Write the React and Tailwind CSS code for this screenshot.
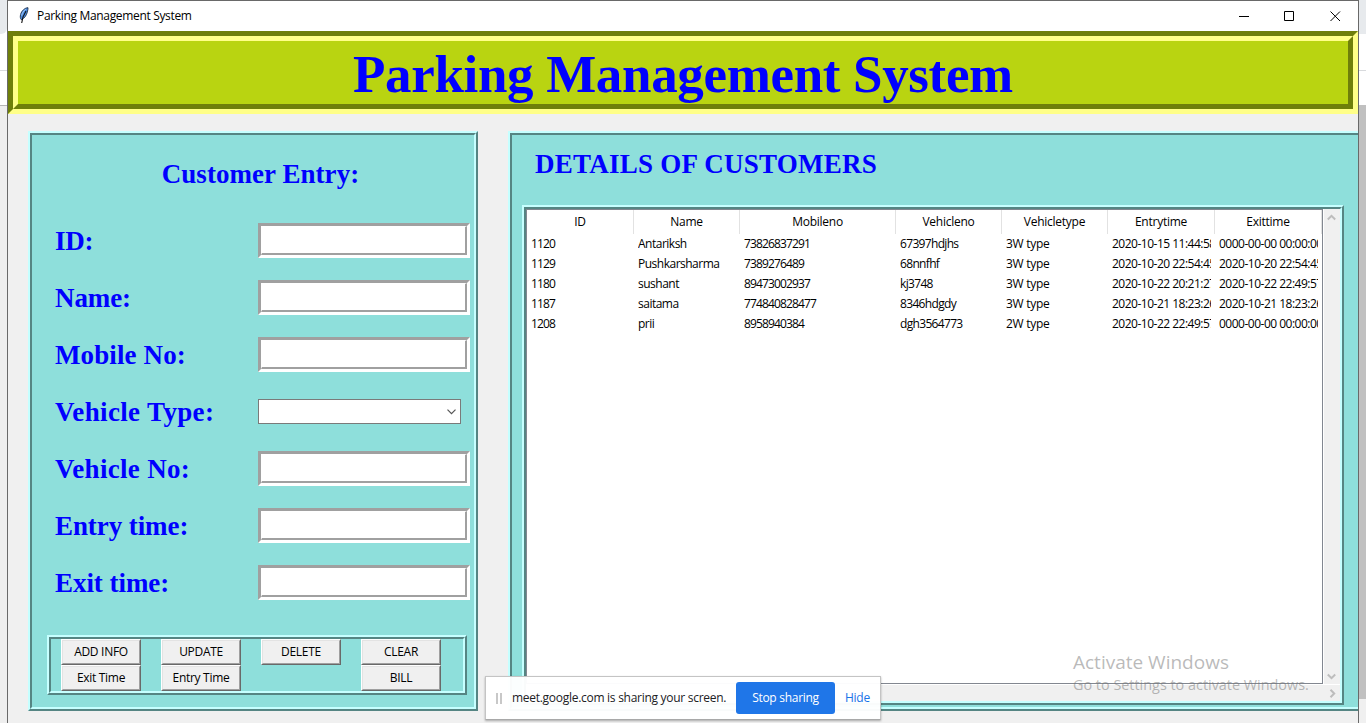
import React from "react";

const UI = "font-['Open_Sans','Noto_Sans',sans-serif] text-black";
const SERIF = "font-['Liberation_Serif',serif] font-bold text-[#0000ff] whitespace-nowrap";

const COLUMNS = [
  { name: "ID", w: "w-[107px]", t: "tracking-[-0.85px]" },
  { name: "Name", w: "w-[106px]", t: "tracking-[-0.5px]" },
  { name: "Mobileno", w: "w-[156px]", t: "tracking-[-0.85px]" },
  { name: "Vehicleno", w: "w-[106px]", t: "tracking-[-0.67px]" },
  { name: "Vehicletype", w: "w-[106px]", t: "tracking-[-0.28px]" },
  { name: "Entrytime", w: "w-[107px]", t: "tracking-[-0.5px]" },
  { name: "Exittime", w: "w-[107px]", t: "tracking-[-0.5px]" },
];

const ROWS = [
  ["1120", "Antariksh", "73826837291", "67397hdjhs", "3W type", "2020-10-15 11:44:58", "0000-00-00 00:00:00"],
  ["1129", "Pushkarsharma", "7389276489", "68nnfhf", "3W type", "2020-10-20 22:54:45", "2020-10-20 22:54:45"],
  ["1180", "sushant", "89473002937", "kj3748", "3W type", "2020-10-22 20:21:27", "2020-10-22 22:49:57"],
  ["1187", "saitama", "774840828477", "8346hdgdy", "3W type", "2020-10-21 18:23:26", "2020-10-21 18:23:26"],
  ["1208", "prii", "8958940384", "dgh3564773", "2W type", "2020-10-22 22:49:57", "0000-00-00 00:00:00"],
];

const FIELDS = [
  { label: "ID:", t: "tracking-[-0.3px]" },
  { label: "Name:", t: "tracking-[-0.1px]" },
  { label: "Mobile No:", t: "tracking-[0.12px]" },
  { label: "Vehicle Type:", t: "tracking-[0.35px]", combo: true },
  { label: "Vehicle No:", t: "tracking-[0.3px]" },
  { label: "Entry time:", t: "tracking-[-0.08px]" },
  { label: "Exit time:", t: "tracking-[-0.05px]" },
];

const BUTTONS = [
  ["ADD INFO", "Exit Time"],
  ["UPDATE", "Entry Time"],
  ["DELETE"],
  ["CLEAR", "BILL"],
];

function Ridge({ className, inner = "", children }) {
  return (
    <div className={`shrink-0 border-2 border-t-[#c6ffff] border-l-[#c6ffff] border-b-[#558583] border-r-[#558583] ${className}`}>
      <div className={`h-full w-full border-2 border-t-[#558583] border-l-[#558583] border-b-[#c6ffff] border-r-[#c6ffff] bg-[#8edfdb] ${inner}`}>
        {children}
      </div>
    </div>
  );
}

function Entry() {
  return (
    <div className="h-[35px] w-[212px] border-[3px] border-t-[#a0a0a0] border-l-[#a0a0a0] border-b-white border-r-white">
      <div className="h-full w-full border-t border-l border-r-2 border-b-2 border-t-white border-l-white border-b-[#a0a0a0] border-r-[#a0a0a0] bg-white" />
    </div>
  );
}

function Combo() {
  return (
    <div className="mt-[5px] flex h-[25px] w-[203px] items-center justify-end border border-[#7a7a7a] bg-white pr-1">
      <svg width="9" height="6" viewBox="0 0 9 6" fill="none" stroke="#555" strokeWidth="1.2">
        <path d="M.5 .7 4.5 4.700 8.500 .7" />
      </svg>
    </div>
  );
}

function Button({ children }) {
  return (
    <div className="h-[26px] w-20 border border-t-white border-l-white border-b-[#696969] border-r-[#696969]">
      <div className={`flex h-full w-full items-center justify-center border border-t-[#e3e3e3] border-l-[#e3e3e3] border-b-[#a0a0a0] border-r-[#a0a0a0] bg-[#f0f0f0] text-[12px] leading-none tracking-[-0.3px] whitespace-nowrap ${UI}`}>
        {children}
      </div>
    </div>
  );
}

function Feather() {
  return (
    <svg width="10" height="17" viewBox="0 0 10 17">
      <path d="M9 .7C6 .8 2.600 3.500 1.600 7.500c-.6 2.200-.3 4 .7 5.200C5.200 11.500 7.600 8.500 8.300 5 8.700 3.200 9.200 1.700 9 .7Z" fill="#4b8be0" stroke="#1c2f4a" strokeWidth=".9" />
      <path d="M7 4 C5 7 3.400 10 2.700 16" fill="none" stroke="#111" strokeWidth="1.100" />
      <path d="M6.800 2.300C4.500 4 3.200 6 2.700 8.500" fill="none" stroke="#a9cdf7" strokeWidth=".9" />
    </svg>
  );
}

function TitleBar() {
  return (
    <div className="flex h-[30px] shrink-0 items-center bg-white pl-[11px]">
      <div className="-mt-0.5">
        <Feather />
      </div>
      <span className={`ml-2 grow text-[12px] leading-none tracking-[-0.33px] ${UI}`}>Parking Management System</span>
      <svg width="104" height="12" viewBox="0 0 104 12" className="-mt-px mr-[16px]" fill="none" stroke="#000">
        <path d="M1 6.500h10M46.500 1.500h9v9h-9zM92.500 1.500l9.500 9.500M102 1.500l-9.500 9.500" />
      </svg>
    </div>
  );
}

function CustomerEntry() {
  return (
    <Ridge className="h-[580px] w-[450px]" inner="flex flex-col">
      <h2 className={`mt-[23px] h-8 pl-[15px] text-center text-[27px] leading-8 tracking-[0.05px] ${SERIF}`}>Customer Entry:</h2>
      <div className="mt-[33px] flex flex-col gap-[22px]">
        {FIELDS.map((f) => (
          <div key={f.label} className="flex h-[35px] pl-[23px]">
            <div className={`w-[203px] text-[27px] leading-[36px] ${f.t} ${SERIF}`}>{f.label}</div>
            {f.combo ? <Combo /> : <Entry />}
          </div>
        ))}
      </div>
      <Ridge className="mt-[35px] ml-[15px] h-[60px] w-[420px]" inner="flex gap-5 pl-2.5">
        {BUTTONS.map((col) => (
          <div key={col[0]} className="flex flex-col">
            {col.map((b) => (
              <Button key={b}>{b}</Button>
            ))}
          </div>
        ))}
      </Ridge>
    </Ridge>
  );
}

function Chevron({ className = "" }) {
  return (
    <svg width="9" height="7" viewBox="0 0 9 7" className={className} fill="none" stroke="#bdbdbd" strokeWidth="2">
      <path d="M.8 5.500 4.500 1.800 8.200 5.500" />
    </svg>
  );
}

function CustomerTable() {
  return (
    <Ridge className="h-[500px] w-[822px]" inner="flex flex-col">
      <div className="flex h-[475px]">
        <div className={`w-[797px] border border-[#828790] bg-white text-[12px] ${UI}`}>
          <div className="flex h-6">
            {COLUMNS.map((c) => (
              <div key={c.name} className={`flex shrink-0 items-center justify-center border-r border-[#e2e2e2] leading-none tracking-[-0.25px] ${c.w}`}>
                {c.name}
              </div>
            ))}
          </div>
          {ROWS.map((r) => (
            <div key={r[0]} className="flex h-5">
              {r.map((v, i) => (
                <div key={i} className={`shrink-0 pr-1 pl-1 ${COLUMNS[i].w} ${COLUMNS[i].t}`}>
                  <div className="overflow-hidden leading-5 whitespace-nowrap">{v}</div>
                </div>
              ))}
            </div>
          ))}
        </div>
        <div className="flex grow flex-col items-center justify-between border-l border-white bg-[#f0f0f0] pt-[5px] pr-px pb-1">
          <Chevron />
          <Chevron className="rotate-180" />
        </div>
      </div>
      <div className="flex grow items-center justify-end border-t border-white bg-[#f0f0f0] pr-[3px]">
        <Chevron className="rotate-90" />
      </div>
    </Ridge>
  );
}

function Details() {
  return (
    <Ridge className="h-[580px] w-[900px]" inner="flex flex-col pl-2.5">
      <h2 className={`mt-[13px] h-[57px] pl-[13px] text-[27px] leading-8 tracking-[0.25px] ${SERIF}`}>DETAILS OF CUSTOMERS</h2>
      <CustomerTable />
    </Ridge>
  );
}

function ShareBar() {
  return (
    <div className={`absolute top-[676px] left-[485px] flex h-11 w-[396px] items-center border border-[#c4c4c4] border-b-[#a8a8a8] bg-white/97 pl-2.5 tracking-[-0.28px] shadow-[0_1px_2px_rgba(0,0,0,0.3)] ${UI}`}>
      <div className="h-[11px] w-1.5 shrink-0 border-x-2 border-[#c8c8c8]" />
      <span className="ml-2.5 w-[224px] shrink-0 text-[12px] whitespace-nowrap text-[#202124]">meet.google.com is sharing your screen.</span>
      <div className="flex h-8 w-[99px] shrink-0 items-center justify-center rounded-[3px] bg-[#1f76e8] text-[12px] text-white">Stop sharing</div>
      <span className="ml-2.5 text-[12px] text-[#1a73e8]">Hide</span>
    </div>
  );
}

export default function App() {
  return (
    <div className="relative flex h-[723px] w-[1366px] overflow-hidden bg-[#f0f0f0]">
      <div className="flex w-[7px] shrink-0 flex-col bg-[#eeeeee]">
        <div className="h-[106px] border-b border-[#b5b5b5] bg-white">
          <div className="h-[34px] rounded-br-md bg-[#e7eaed]" />
          <div className="h-[37px] border-b border-[#d8dadd]" />
        </div>
      </div>
      <div className="flex w-[1352px] shrink-0 flex-col overflow-hidden border-x border-t border-[#696969] bg-[#f0f0f0]">
        <TitleBar />
        <div className="h-[83px] shrink-0 border-[5px] border-t-[#6f7f0a] border-l-[#6f7f0a] border-r-[#ffff88] border-b-[#ffff88]">
          <div className="h-full border-[5px] border-t-[#ffff88] border-l-[#ffff88] border-r-[#6f7f0a] border-b-[#6f7f0a] bg-[#b9d411]">
            <h1 className={`text-center text-[53px] leading-[66px] tracking-[-0.34px] ${SERIF}`}>Parking Management System</h1>
          </div>
        </div>
        <div className="mt-[17px] flex gap-[30px] pl-5">
          <CustomerEntry />
          <Details />
        </div>
      </div>
      <div className="flex w-[7px] shrink-0 flex-col bg-[#f0f0f0]">
        <div className="h-[34px] shrink-0 bg-[#e7eaed]" />
        <div className="h-[37px] shrink-0 border-b border-[#d8dadd] bg-white" />
        <div className="h-[34px] shrink-0 bg-white" />
        <div className="h-[594px] shrink-0 bg-[#c0c0c0]" />
      </div>
      <div className="absolute top-[650px] left-[1073px] font-['Open_Sans','Noto_Sans',sans-serif] whitespace-nowrap text-[#757575]/50">
        <div className="text-[19px] leading-6">Activate Windows</div>
        <div className="text-[14.4px] leading-[22px]">Go to Settings to activate Windows.</div>
      </div>
      <ShareBar />
    </div>
  );
}
